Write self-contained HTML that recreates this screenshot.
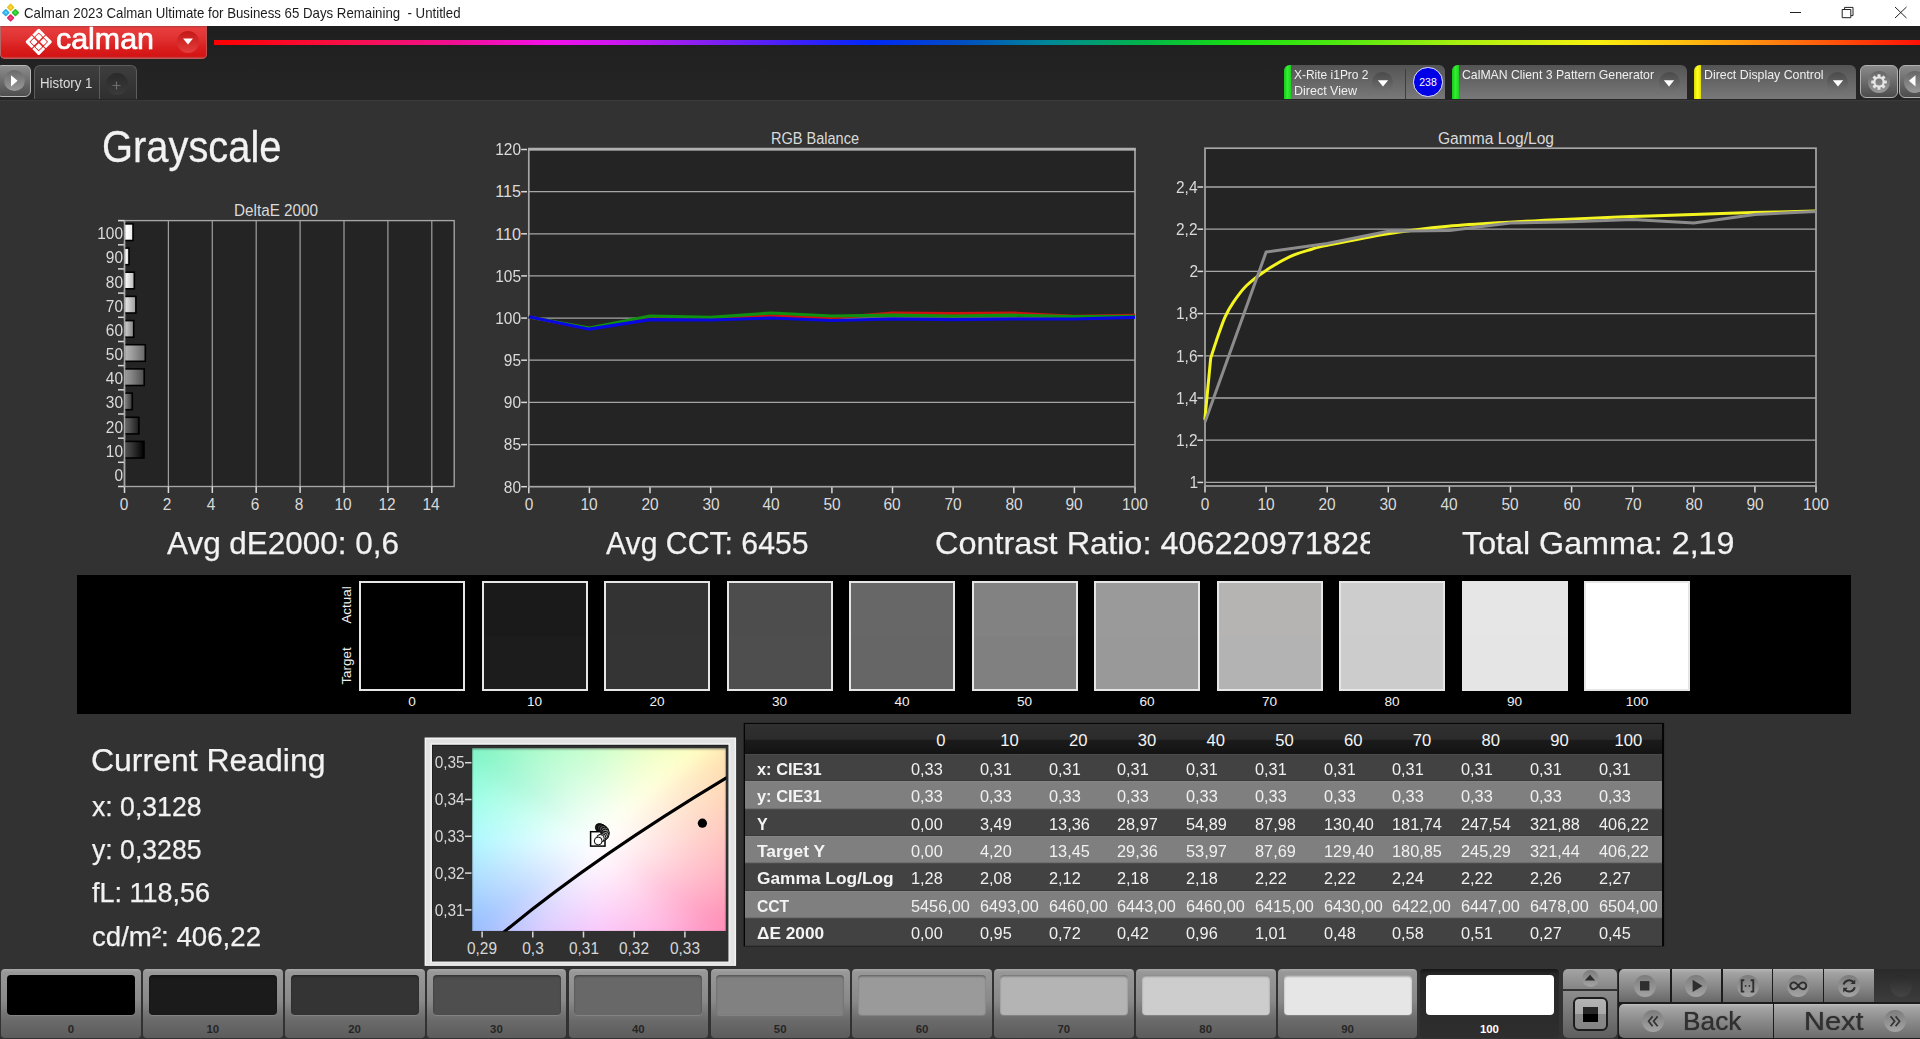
<!DOCTYPE html>
<html><head><meta charset="utf-8"><title>Calman</title>
<style>
html,body{margin:0;padding:0;background:#323232;overflow:hidden}
#app{position:relative;width:1920px;height:1039px;overflow:hidden;background:#323232;font-family:"Liberation Sans",sans-serif}
#app div,#app svg,#app span.t{position:absolute}
#app span.t{white-space:nowrap;display:block}
#app svg{overflow:visible}
</style></head>
<body>
<div id="app">
<div style="left:0;top:0;width:1920px;height:25.5px;background:#fff"></div>
<svg style="left:0;top:0" width="24" height="26" viewBox="0 0 24 26">
<g transform="translate(10.6,12.6)">
<rect x="-2.85" y="-2.85" width="5.7" height="5.7" rx="0.9" transform="translate(0,-5.3) rotate(45)" fill="#f0c31c"/>
<rect x="-2.85" y="-2.85" width="5.7" height="5.7" rx="0.9" transform="translate(-4.8,0) rotate(45)" fill="#34ade6"/>
<rect x="-2.85" y="-2.85" width="5.7" height="5.7" rx="0.9" transform="translate(4.8,0) rotate(45)" fill="#2cbc2c"/>
<rect x="-2.85" y="-2.85" width="5.7" height="5.7" rx="0.9" transform="translate(0,5.3) rotate(45)" fill="#de2a62"/>
<rect x="-1.2" y="-1.2" width="2.4" height="2.4" transform="translate(0,-5.3) rotate(45)" fill="#f8d838"/>
<rect x="-1.2" y="-1.2" width="2.4" height="2.4" transform="translate(-4.8,0) rotate(45)" fill="#58d4f8"/>
<rect x="-1.2" y="-1.2" width="2.4" height="2.4" transform="translate(4.8,0) rotate(45)" fill="#40e840"/>
<rect x="-1.2" y="-1.2" width="2.4" height="2.4" transform="translate(0,5.3) rotate(45)" fill="#f84888"/>
</g></svg>
<span class="t" style="top:5.10px;font-size:15px;line-height:15px;color:#1c1c1c;left:23.50px;transform-origin:0 0;transform:scaleX(0.8829);">Calman 2023 Calman Ultimate for Business 65 Days Remaining&nbsp; - Untitled</span>
<svg style="left:1780px;top:0" width="140" height="26" viewBox="1780 0 140 26" fill="none" stroke="#222" stroke-width="1">
<path d="M1790 12.5H1801"/>
<path d="M1842.2 9.5h8.6v8.2h-8.6z"/><path d="M1844.6 9.3V7.4h8.4v8.2h-2"/>
<path d="M1895 7L1906.5 18M1906.5 7L1895 18"/>
</svg>
<div style="left:0;top:25.5px;width:1920px;height:74px;background:linear-gradient(#1e1e1e,#222 50%,#252525)"></div><div style="left:0;top:99.5px;width:1920px;height:1.3px;background:#3a3a3a"></div>
<div style="left:0;top:25.5px;width:206.5px;height:33px;border-radius:0 0 5px 5px;background:linear-gradient(#b43a3a 0,#e73e3e 2px,#e03030 40%,#d81c1c 70%,#d41414 92%,#b86a6a 100%);box-shadow:inset 1px 0 0 #b06a6a, inset -1px 0 0 #c05050"></div>
<svg style="left:20px;top:26px" width="40" height="32" viewBox="20 26 40 32">
<g fill="none" stroke="#fff" stroke-width="3.0" stroke-linecap="butt" stroke-linejoin="round">
<path d="M33.35 35.80L38.75 30.40L44.15 35.80"/>
<path d="M44.85 36.50L50.25 41.90L44.85 47.30"/>
<path d="M44.15 48.00L38.75 53.40L33.35 48.00"/>
<path d="M32.65 47.30L27.25 41.90L32.65 36.50"/>
</g>
<g fill="#fff">
<rect x="-2.55" y="-2.55" width="5.1" height="5.1" rx="0.9" transform="translate(38.75,37.2) rotate(45)"/>
<rect x="-2.55" y="-2.55" width="5.1" height="5.1" rx="0.9" transform="translate(38.75,46.6) rotate(45)"/>
<rect x="-2.55" y="-2.55" width="5.1" height="5.1" rx="0.9" transform="translate(34.05,41.9) rotate(45)"/>
<rect x="-2.55" y="-2.55" width="5.1" height="5.1" rx="0.9" transform="translate(43.45,41.9) rotate(45)"/>
</g></svg>
<span class="t" style="top:23.80px;font-size:29.5px;line-height:29.5px;color:#fff;left:55.50px;transform-origin:0 0;transform:scaleX(1.0304);-webkit-text-stroke:0.7px #fff;">calman</span>
<div style="left:176.5px;top:30.5px;width:22px;height:22px;border-radius:50%;background:linear-gradient(#c41818,#e43c3c)"></div>
<svg style="left:181.5px;top:37.2px" width="12" height="10" viewBox="0 0 12 10"><path d="M1 1.5h10L6 7.5z" fill="#fff"/></svg>
<div style="left:214px;top:40px;width:1706px;height:4.5px;background:linear-gradient(90deg,#ff0000 0,#f8104c 8%,#f01090 14%,#f410e8 19.6%,#c818f0 24%,#9020f0 28%,#4020f8 34%,#0028f8 38.5%,#0050c0 44%,#008898 49%,#00b050 54%,#18e010 60%,#50e810 66%,#a8f010 73%,#f8f010 81%,#ffc010 86%,#ff8010 91.5%,#ff3808 97%,#ff1008 100%)"></div>
<div style="left:-4px;top:64.5px;width:34.5px;height:32px;border-radius:6px;border:1.5px solid #b8b8b8;box-sizing:border-box;background:linear-gradient(#8c8c8c,#4e4e4e)"></div>
<div style="left:3.5px;top:70px;width:21px;height:21px;border-radius:50%;background:linear-gradient(#6a6a6a,#9a9a9a)"></div>
<svg style="left:8px;top:73px" width="12" height="16" viewBox="0 0 12 16"><path d="M3 2.2L9.6 7.8L3 13.4z" fill="#fff"/></svg>
<div style="left:33.5px;top:65px;width:103.5px;height:34px;border-radius:6px 6px 0 0;box-sizing:border-box;border:1px solid #5c5c5c;border-bottom:none;background:linear-gradient(#3e3e3e,#2f2f2f)"></div>
<div style="left:98.5px;top:66px;width:1.5px;height:33px;background:#5c5c5c"></div>
<span class="t" style="top:76.00px;font-size:14px;line-height:14px;color:#dcdcdc;left:40.00px;transform-origin:0 0;transform:scaleX(0.9505);">History 1</span>
<div style="left:105.5px;top:73px;width:22px;height:22px;border-radius:50%;background:linear-gradient(#2a2a2a,#3a3a3a)"></div>
<svg style="left:111px;top:80px" width="11" height="11" viewBox="0 0 11 11"><path d="M5.5 1.5v8M1.5 5.5h8" stroke="#6e6e6e" stroke-width="1.2"/></svg>
<div style="left:1284px;top:65px;width:161px;height:34px;border-radius:6px 6px 0 0;background:linear-gradient(#545454,#6a6a6a 60%,#787878)"></div>
<div style="left:1284px;top:65px;width:7px;height:34px;border-radius:6px 0 0 0;background:linear-gradient(90deg,#18c818,#30f030 50%,#20d020)"></div>
<div style="left:1404.5px;top:69px;width:1.5px;height:30px;background:#3e3e3e"></div>
<span class="t" style="top:68.60px;font-size:12.6px;line-height:12.6px;color:#f0f0f0;left:1294.00px;transform-origin:0 0;transform:scaleX(0.9502);">X-Rite i1Pro 2</span>
<span class="t" style="top:85.20px;font-size:12.6px;line-height:12.6px;color:#f0f0f0;left:1294.00px;transform-origin:0 0;transform:scaleX(0.9926);">Direct View</span>
<div style="left:1372.0px;top:72.0px;width:21.0px;height:21.0px;border-radius:50%;background:linear-gradient(#4a4a4a,#737373)"></div><svg style="left:1376.5px;top:79.0px" width="12" height="9" viewBox="0 0 12 9"><path d="M0.8 1.2h10.4L6 7.4z" fill="#fff"/></svg>
<div style="left:1413.3px;top:67.3px;width:29.4px;height:29.4px;box-sizing:border-box;border-radius:50%;background:#0000e6;border:1.5px solid #e8e8ff"></div>
<span class="t" style="top:77.20px;font-size:11.5px;line-height:11.5px;color:#fff;left:1428.00px;transform-origin:0 0;transform:scaleX(0.9121) translateX(-50%);">238</span>
<div style="left:1452px;top:65px;width:235px;height:34px;border-radius:6px 6px 0 0;background:linear-gradient(#545454,#6a6a6a 60%,#787878)"></div>
<div style="left:1452px;top:65px;width:7px;height:34px;border-radius:6px 0 0 0;background:linear-gradient(90deg,#18c818,#30f030 50%,#20d020)"></div>
<span class="t" style="top:68.60px;font-size:12.6px;line-height:12.6px;color:#f0f0f0;left:1462.00px;transform-origin:0 0;transform:scaleX(0.9727);">CalMAN Client 3 Pattern Generator</span>
<div style="left:1658.5px;top:72.0px;width:21.0px;height:21.0px;border-radius:50%;background:linear-gradient(#4a4a4a,#737373)"></div><svg style="left:1663px;top:79.0px" width="12" height="9" viewBox="0 0 12 9"><path d="M0.8 1.2h10.4L6 7.4z" fill="#fff"/></svg>
<div style="left:1694px;top:65px;width:162px;height:34px;border-radius:6px 6px 0 0;background:linear-gradient(#545454,#6a6a6a 60%,#787878)"></div>
<div style="left:1694px;top:65px;width:7px;height:34px;border-radius:6px 0 0 0;background:linear-gradient(90deg,#d8d800,#ffff20 50%,#e0e000)"></div>
<span class="t" style="top:68.60px;font-size:12.6px;line-height:12.6px;color:#f0f0f0;left:1704.00px;transform-origin:0 0;transform:scaleX(0.9813);">Direct Display Control</span>
<div style="left:1827.0px;top:72.0px;width:21.0px;height:21.0px;border-radius:50%;background:linear-gradient(#4a4a4a,#737373)"></div><svg style="left:1831.5px;top:79.0px" width="12" height="9" viewBox="0 0 12 9"><path d="M0.8 1.2h10.4L6 7.4z" fill="#fff"/></svg>
<div style="left:1859.5px;top:65px;width:38px;height:32.5px;border-radius:6px;border:1.5px solid #b0b0b0;box-sizing:border-box;background:linear-gradient(#8a8a8a,#4c4c4c)"></div>
<div style="left:1867.5px;top:70.5px;width:22px;height:22px;border-radius:50%;background:linear-gradient(#666,#999)"></div>
<svg style="left:1868.5px;top:71.5px" width="20" height="20" viewBox="-10 -10 20 20"><g fill="#e6e6e6"><rect x="-1.5" y="-7.8" width="3" height="3.2" rx="0.5" transform="rotate(0)"/><rect x="-1.5" y="-7.8" width="3" height="3.2" rx="0.5" transform="rotate(45)"/><rect x="-1.5" y="-7.8" width="3" height="3.2" rx="0.5" transform="rotate(90)"/><rect x="-1.5" y="-7.8" width="3" height="3.2" rx="0.5" transform="rotate(135)"/><rect x="-1.5" y="-7.8" width="3" height="3.2" rx="0.5" transform="rotate(180)"/><rect x="-1.5" y="-7.8" width="3" height="3.2" rx="0.5" transform="rotate(225)"/><rect x="-1.5" y="-7.8" width="3" height="3.2" rx="0.5" transform="rotate(270)"/><rect x="-1.5" y="-7.8" width="3" height="3.2" rx="0.5" transform="rotate(315)"/></g><circle r="4.6" fill="none" stroke="#e6e6e6" stroke-width="2.1"/></svg>
<div style="left:1898.5px;top:65px;width:38px;height:32.5px;border-radius:6px;border:1.5px solid #b0b0b0;box-sizing:border-box;background:linear-gradient(#8a8a8a,#4c4c4c)"></div>
<div style="left:1904px;top:70.5px;width:22px;height:22px;border-radius:50%;background:linear-gradient(#666,#999)"></div>
<svg style="left:1906px;top:73px" width="12" height="16" viewBox="0 0 12 16"><path d="M9.5 2.2L2.9 7.8L9.5 13.4z" fill="#fff"/></svg>
<svg style="left:0;top:200px" width="480" height="300" viewBox="0 200 480 300"><defs><linearGradient id="bg100" x1="0" x2="1" y1="0" y2="0"><stop offset="0" stop-color="#ffffff"/><stop offset="0.35" stop-color="#ffffff"/><stop offset="1" stop-color="#e6e6e6"/></linearGradient><linearGradient id="bg90" x1="0" x2="1" y1="0" y2="0"><stop offset="0" stop-color="#ffffff"/><stop offset="0.35" stop-color="#ffffff"/><stop offset="1" stop-color="#cccccc"/></linearGradient><linearGradient id="bg80" x1="0" x2="1" y1="0" y2="0"><stop offset="0" stop-color="#ffffff"/><stop offset="0.35" stop-color="#ebebeb"/><stop offset="1" stop-color="#b3b3b3"/></linearGradient><linearGradient id="bg70" x1="0" x2="1" y1="0" y2="0"><stop offset="0" stop-color="#ebebeb"/><stop offset="0.35" stop-color="#d1d1d1"/><stop offset="1" stop-color="#999999"/></linearGradient><linearGradient id="bg60" x1="0" x2="1" y1="0" y2="0"><stop offset="0" stop-color="#d1d1d1"/><stop offset="0.35" stop-color="#b8b8b8"/><stop offset="1" stop-color="#808080"/></linearGradient><linearGradient id="bg50" x1="0" x2="1" y1="0" y2="0"><stop offset="0" stop-color="#b8b8b8"/><stop offset="0.35" stop-color="#9e9e9e"/><stop offset="1" stop-color="#666666"/></linearGradient><linearGradient id="bg40" x1="0" x2="1" y1="0" y2="0"><stop offset="0" stop-color="#9e9e9e"/><stop offset="0.35" stop-color="#858585"/><stop offset="1" stop-color="#4d4d4d"/></linearGradient><linearGradient id="bg30" x1="0" x2="1" y1="0" y2="0"><stop offset="0" stop-color="#858585"/><stop offset="0.35" stop-color="#6b6b6b"/><stop offset="1" stop-color="#333333"/></linearGradient><linearGradient id="bg20" x1="0" x2="1" y1="0" y2="0"><stop offset="0" stop-color="#6b6b6b"/><stop offset="0.35" stop-color="#525252"/><stop offset="1" stop-color="#1a1a1a"/></linearGradient><linearGradient id="bg10" x1="0" x2="1" y1="0" y2="0"><stop offset="0" stop-color="#525252"/><stop offset="0.35" stop-color="#383838"/><stop offset="1" stop-color="#000000"/></linearGradient></defs><rect x="124.5" y="220.6" width="329.7" height="265.9" fill="#242424"/><path d="M168.4 220.6V486.5" stroke="#9c9c9c" stroke-width="1.25"/><path d="M212.3 220.6V486.5" stroke="#9c9c9c" stroke-width="1.25"/><path d="M256.2 220.6V486.5" stroke="#9c9c9c" stroke-width="1.25"/><path d="M300.1 220.6V486.5" stroke="#9c9c9c" stroke-width="1.25"/><path d="M344.0 220.6V486.5" stroke="#9c9c9c" stroke-width="1.25"/><path d="M387.9 220.6V486.5" stroke="#9c9c9c" stroke-width="1.25"/><path d="M431.8 220.6V486.5" stroke="#9c9c9c" stroke-width="1.25"/><rect x="124.5" y="220.6" width="329.7" height="265.9" fill="none" stroke="#a6a6a6" stroke-width="1.35"/><path d="M124.5 486.5v6.5" stroke="#dadada" stroke-width="1.5"/><path d="M168.4 486.5v6.5" stroke="#dadada" stroke-width="1.5"/><path d="M212.3 486.5v6.5" stroke="#dadada" stroke-width="1.5"/><path d="M256.2 486.5v6.5" stroke="#dadada" stroke-width="1.5"/><path d="M300.1 486.5v6.5" stroke="#dadada" stroke-width="1.5"/><path d="M344.0 486.5v6.5" stroke="#dadada" stroke-width="1.5"/><path d="M387.9 486.5v6.5" stroke="#dadada" stroke-width="1.5"/><path d="M431.8 486.5v6.5" stroke="#dadada" stroke-width="1.5"/><path d="M118.0 220.6h6.5" stroke="#dadada" stroke-width="1.5"/><rect x="124.3" y="223.9" width="8.7" height="16.6" fill="url(#bg100)" stroke="#000" stroke-width="1.6"/><path d="M118.0 244.8h6.5" stroke="#dadada" stroke-width="1.5"/><rect x="124.3" y="248.1" width="4.7" height="16.6" fill="url(#bg90)" stroke="#000" stroke-width="1.6"/><path d="M118.0 268.9h6.5" stroke="#dadada" stroke-width="1.5"/><rect x="124.3" y="272.2" width="10.0" height="16.6" fill="url(#bg80)" stroke="#000" stroke-width="1.6"/><path d="M118.0 293.1h6.5" stroke="#dadada" stroke-width="1.5"/><rect x="124.3" y="296.4" width="11.6" height="16.6" fill="url(#bg70)" stroke="#000" stroke-width="1.6"/><path d="M118.0 317.3h6.5" stroke="#dadada" stroke-width="1.5"/><rect x="124.3" y="320.6" width="9.4" height="16.6" fill="url(#bg60)" stroke="#000" stroke-width="1.6"/><path d="M118.0 341.5h6.5" stroke="#dadada" stroke-width="1.5"/><rect x="124.3" y="344.7" width="21.0" height="16.6" fill="url(#bg50)" stroke="#000" stroke-width="1.6"/><path d="M118.0 365.6h6.5" stroke="#dadada" stroke-width="1.5"/><rect x="124.3" y="368.9" width="19.9" height="16.6" fill="url(#bg40)" stroke="#000" stroke-width="1.6"/><path d="M118.0 389.8h6.5" stroke="#dadada" stroke-width="1.5"/><rect x="124.3" y="393.1" width="8.0" height="16.6" fill="url(#bg30)" stroke="#000" stroke-width="1.6"/><path d="M118.0 414.0h6.5" stroke="#dadada" stroke-width="1.5"/><rect x="124.3" y="417.3" width="14.6" height="16.6" fill="url(#bg20)" stroke="#000" stroke-width="1.6"/><path d="M118.0 438.2h6.5" stroke="#dadada" stroke-width="1.5"/><rect x="124.3" y="441.4" width="19.7" height="16.6" fill="url(#bg10)" stroke="#000" stroke-width="1.6"/><path d="M118.0 462.3h6.5" stroke="#dadada" stroke-width="1.5"/><path d="M118.0 486.5h6.5" stroke="#dadada" stroke-width="1.5"/><path d="M124.5 220.6V487.3" stroke="#a6a6a6" stroke-width="1.6"/></svg>
<span class="t" style="top:496.00px;font-size:16.2px;line-height:16.2px;color:#dadada;left:123.50px;transform-origin:0 0;transform:scaleX(0.9539) translateX(-50%);">0</span>
<span class="t" style="top:496.00px;font-size:16.2px;line-height:16.2px;color:#dadada;left:167.40px;transform-origin:0 0;transform:scaleX(0.9539) translateX(-50%);">2</span>
<span class="t" style="top:496.00px;font-size:16.2px;line-height:16.2px;color:#dadada;left:211.30px;transform-origin:0 0;transform:scaleX(0.9539) translateX(-50%);">4</span>
<span class="t" style="top:496.00px;font-size:16.2px;line-height:16.2px;color:#dadada;left:255.20px;transform-origin:0 0;transform:scaleX(0.9539) translateX(-50%);">6</span>
<span class="t" style="top:496.00px;font-size:16.2px;line-height:16.2px;color:#dadada;left:299.10px;transform-origin:0 0;transform:scaleX(0.9539) translateX(-50%);">8</span>
<span class="t" style="top:496.00px;font-size:16.2px;line-height:16.2px;color:#dadada;left:343.00px;transform-origin:0 0;transform:scaleX(0.9547) translateX(-50%);">10</span>
<span class="t" style="top:496.00px;font-size:16.2px;line-height:16.2px;color:#dadada;left:386.90px;transform-origin:0 0;transform:scaleX(0.9547) translateX(-50%);">12</span>
<span class="t" style="top:496.00px;font-size:16.2px;line-height:16.2px;color:#dadada;left:430.80px;transform-origin:0 0;transform:scaleX(0.9547) translateX(-50%);">14</span>
<span class="t" style="top:225.19px;font-size:16.2px;line-height:16.2px;color:#dadada;right:1797.00px;transform-origin:100% 0;transform:scaleX(0.9550);">100</span>
<span class="t" style="top:249.36px;font-size:16.2px;line-height:16.2px;color:#dadada;right:1797.00px;transform-origin:100% 0;transform:scaleX(0.9547);">90</span>
<span class="t" style="top:273.53px;font-size:16.2px;line-height:16.2px;color:#dadada;right:1797.00px;transform-origin:100% 0;transform:scaleX(0.9547);">80</span>
<span class="t" style="top:297.70px;font-size:16.2px;line-height:16.2px;color:#dadada;right:1797.00px;transform-origin:100% 0;transform:scaleX(0.9547);">70</span>
<span class="t" style="top:321.88px;font-size:16.2px;line-height:16.2px;color:#dadada;right:1797.00px;transform-origin:100% 0;transform:scaleX(0.9547);">60</span>
<span class="t" style="top:346.05px;font-size:16.2px;line-height:16.2px;color:#dadada;right:1797.00px;transform-origin:100% 0;transform:scaleX(0.9547);">50</span>
<span class="t" style="top:370.22px;font-size:16.2px;line-height:16.2px;color:#dadada;right:1797.00px;transform-origin:100% 0;transform:scaleX(0.9547);">40</span>
<span class="t" style="top:394.40px;font-size:16.2px;line-height:16.2px;color:#dadada;right:1797.00px;transform-origin:100% 0;transform:scaleX(0.9547);">30</span>
<span class="t" style="top:418.57px;font-size:16.2px;line-height:16.2px;color:#dadada;right:1797.00px;transform-origin:100% 0;transform:scaleX(0.9547);">20</span>
<span class="t" style="top:442.74px;font-size:16.2px;line-height:16.2px;color:#dadada;right:1797.00px;transform-origin:100% 0;transform:scaleX(0.9547);">10</span>
<span class="t" style="top:466.91px;font-size:16.2px;line-height:16.2px;color:#dadada;right:1797.00px;transform-origin:100% 0;transform:scaleX(0.9539);">0</span>
<span class="t" style="top:202.60px;font-size:16px;line-height:16px;color:#dadada;left:276.20px;transform-origin:0 0;transform:scaleX(0.9539) translateX(-50%);">DeltaE 2000</span>
<svg style="left:490px;top:140px" width="670px" height="360" viewBox="490 140 670 360"><rect x="528.8" y="149.5" width="606.2" height="337.2" fill="#242424"/><path d="M521.1999999999999 149.5h5.8" stroke="#dadada" stroke-width="1.5"/><path d="M528.8 191.7H1135.0" stroke="#a6a6a6" stroke-width="1.3"/><path d="M521.1999999999999 191.7h5.8" stroke="#dadada" stroke-width="1.5"/><path d="M528.8 233.8H1135.0" stroke="#a6a6a6" stroke-width="1.3"/><path d="M521.1999999999999 233.8h5.8" stroke="#dadada" stroke-width="1.5"/><path d="M528.8 275.9H1135.0" stroke="#a6a6a6" stroke-width="1.3"/><path d="M521.1999999999999 275.9h5.8" stroke="#dadada" stroke-width="1.5"/><path d="M528.8 318.1H1135.0" stroke="#a6a6a6" stroke-width="1.3"/><path d="M521.1999999999999 318.1h5.8" stroke="#dadada" stroke-width="1.5"/><path d="M528.8 360.2H1135.0" stroke="#a6a6a6" stroke-width="1.3"/><path d="M521.1999999999999 360.2h5.8" stroke="#dadada" stroke-width="1.5"/><path d="M528.8 402.4H1135.0" stroke="#a6a6a6" stroke-width="1.3"/><path d="M521.1999999999999 402.4h5.8" stroke="#dadada" stroke-width="1.5"/><path d="M528.8 444.6H1135.0" stroke="#a6a6a6" stroke-width="1.3"/><path d="M521.1999999999999 444.6h5.8" stroke="#dadada" stroke-width="1.5"/><path d="M521.1999999999999 486.7h5.8" stroke="#dadada" stroke-width="1.5"/><path d="M528.8 486.7v6.5" stroke="#dadada" stroke-width="1.5"/><path d="M589.4 486.7v6.5" stroke="#dadada" stroke-width="1.5"/><path d="M650.0 486.7v6.5" stroke="#dadada" stroke-width="1.5"/><path d="M710.7 486.7v6.5" stroke="#dadada" stroke-width="1.5"/><path d="M771.3 486.7v6.5" stroke="#dadada" stroke-width="1.5"/><path d="M831.9 486.7v6.5" stroke="#dadada" stroke-width="1.5"/><path d="M892.5 486.7v6.5" stroke="#dadada" stroke-width="1.5"/><path d="M953.1 486.7v6.5" stroke="#dadada" stroke-width="1.5"/><path d="M1013.8 486.7v6.5" stroke="#dadada" stroke-width="1.5"/><path d="M1074.4 486.7v6.5" stroke="#dadada" stroke-width="1.5"/><path d="M1135.0 486.7v6.5" stroke="#dadada" stroke-width="1.5"/><rect x="528.8" y="149.5" width="606.2" height="337.2" fill="none" stroke="#a6a6a6" stroke-width="1.7"/><path d="M528.0 149.2H1135.8" stroke="#b0b0b0" stroke-width="2.8"/><path d="M528.8 317.0L589.4 328.6L650.0 318.0L710.7 318.5L771.3 316.0L831.9 318.0L892.5 313.2L953.1 313.6L1013.8 313.2L1074.4 316.4L1135.0 315.3" fill="none" stroke="#d01010" stroke-width="3.2" stroke-linejoin="round"/><path d="M528.8 317.0L589.4 328.0L650.0 316.0L710.7 317.3L771.3 313.0L831.9 316.0L892.5 315.2L953.1 316.0L1013.8 315.2L1074.4 316.6L1135.0 316.4" fill="none" stroke="#109010" stroke-width="3.2" stroke-linejoin="round"/><path d="M528.8 316.7L589.4 329.2L650.0 319.7L710.7 320.0L771.3 318.0L831.9 320.5L892.5 319.0L953.1 319.7L1013.8 319.0L1074.4 319.0L1135.0 317.3" fill="none" stroke="#0808e0" stroke-width="3.2" stroke-linejoin="round"/></svg>
<span class="t" style="top:141.30px;font-size:16.2px;line-height:16.2px;color:#dadada;right:1399.00px;transform-origin:100% 0;transform:scaleX(0.9550);">120</span>
<span class="t" style="top:183.45px;font-size:16.2px;line-height:16.2px;color:#dadada;right:1399.00px;transform-origin:100% 0;">115</span>
<span class="t" style="top:225.60px;font-size:16.2px;line-height:16.2px;color:#dadada;right:1399.00px;transform-origin:100% 0;">110</span>
<span class="t" style="top:267.75px;font-size:16.2px;line-height:16.2px;color:#dadada;right:1399.00px;transform-origin:100% 0;transform:scaleX(0.9550);">105</span>
<span class="t" style="top:309.90px;font-size:16.2px;line-height:16.2px;color:#dadada;right:1399.00px;transform-origin:100% 0;transform:scaleX(0.9550);">100</span>
<span class="t" style="top:352.05px;font-size:16.2px;line-height:16.2px;color:#dadada;right:1399.00px;transform-origin:100% 0;transform:scaleX(0.9547);">95</span>
<span class="t" style="top:394.20px;font-size:16.2px;line-height:16.2px;color:#dadada;right:1399.00px;transform-origin:100% 0;transform:scaleX(0.9547);">90</span>
<span class="t" style="top:436.35px;font-size:16.2px;line-height:16.2px;color:#dadada;right:1399.00px;transform-origin:100% 0;transform:scaleX(0.9547);">85</span>
<span class="t" style="top:478.50px;font-size:16.2px;line-height:16.2px;color:#dadada;right:1399.00px;transform-origin:100% 0;transform:scaleX(0.9547);">80</span>
<span class="t" style="top:496.00px;font-size:16.2px;line-height:16.2px;color:#dadada;left:528.70px;transform-origin:0 0;transform:scaleX(0.9539) translateX(-50%);">0</span>
<span class="t" style="top:496.00px;font-size:16.2px;line-height:16.2px;color:#dadada;left:589.32px;transform-origin:0 0;transform:scaleX(0.9547) translateX(-50%);">10</span>
<span class="t" style="top:496.00px;font-size:16.2px;line-height:16.2px;color:#dadada;left:649.94px;transform-origin:0 0;transform:scaleX(0.9547) translateX(-50%);">20</span>
<span class="t" style="top:496.00px;font-size:16.2px;line-height:16.2px;color:#dadada;left:710.56px;transform-origin:0 0;transform:scaleX(0.9547) translateX(-50%);">30</span>
<span class="t" style="top:496.00px;font-size:16.2px;line-height:16.2px;color:#dadada;left:771.18px;transform-origin:0 0;transform:scaleX(0.9547) translateX(-50%);">40</span>
<span class="t" style="top:496.00px;font-size:16.2px;line-height:16.2px;color:#dadada;left:831.80px;transform-origin:0 0;transform:scaleX(0.9547) translateX(-50%);">50</span>
<span class="t" style="top:496.00px;font-size:16.2px;line-height:16.2px;color:#dadada;left:892.42px;transform-origin:0 0;transform:scaleX(0.9547) translateX(-50%);">60</span>
<span class="t" style="top:496.00px;font-size:16.2px;line-height:16.2px;color:#dadada;left:953.04px;transform-origin:0 0;transform:scaleX(0.9547) translateX(-50%);">70</span>
<span class="t" style="top:496.00px;font-size:16.2px;line-height:16.2px;color:#dadada;left:1013.66px;transform-origin:0 0;transform:scaleX(0.9547) translateX(-50%);">80</span>
<span class="t" style="top:496.00px;font-size:16.2px;line-height:16.2px;color:#dadada;left:1074.28px;transform-origin:0 0;transform:scaleX(0.9547) translateX(-50%);">90</span>
<span class="t" style="top:496.00px;font-size:16.2px;line-height:16.2px;color:#dadada;left:1134.90px;transform-origin:0 0;transform:scaleX(0.9550) translateX(-50%);">100</span>
<span class="t" style="top:130.60px;font-size:16px;line-height:16px;color:#dadada;left:815.30px;transform-origin:0 0;transform:scaleX(0.9078) translateX(-50%);">RGB Balance</span>
<svg style="left:1170px;top:140px" width="680" height="360" viewBox="1170 140 680 360"><rect x="1205.0" y="148.2" width="611.0" height="337.8" fill="#242424"/><path d="M1205.0 187.0H1816.0" stroke="#a6a6a6" stroke-width="1.3"/><path d="M1197.4 187.0h5.8" stroke="#dadada" stroke-width="1.5"/><path d="M1205.0 229.2H1816.0" stroke="#a6a6a6" stroke-width="1.3"/><path d="M1197.4 229.2h5.8" stroke="#dadada" stroke-width="1.5"/><path d="M1205.0 271.4H1816.0" stroke="#a6a6a6" stroke-width="1.3"/><path d="M1197.4 271.4h5.8" stroke="#dadada" stroke-width="1.5"/><path d="M1205.0 313.6H1816.0" stroke="#a6a6a6" stroke-width="1.3"/><path d="M1197.4 313.6h5.8" stroke="#dadada" stroke-width="1.5"/><path d="M1205.0 355.8H1816.0" stroke="#a6a6a6" stroke-width="1.3"/><path d="M1197.4 355.8h5.8" stroke="#dadada" stroke-width="1.5"/><path d="M1205.0 398.0H1816.0" stroke="#a6a6a6" stroke-width="1.3"/><path d="M1197.4 398.0h5.8" stroke="#dadada" stroke-width="1.5"/><path d="M1205.0 440.2H1816.0" stroke="#a6a6a6" stroke-width="1.3"/><path d="M1197.4 440.2h5.8" stroke="#dadada" stroke-width="1.5"/><path d="M1205.0 482.4H1816.0" stroke="#a6a6a6" stroke-width="1.3"/><path d="M1197.4 482.4h5.8" stroke="#dadada" stroke-width="1.5"/><path d="M1205.0 486.0v6.5" stroke="#dadada" stroke-width="1.5"/><path d="M1266.1 486.0v6.5" stroke="#dadada" stroke-width="1.5"/><path d="M1327.2 486.0v6.5" stroke="#dadada" stroke-width="1.5"/><path d="M1388.3 486.0v6.5" stroke="#dadada" stroke-width="1.5"/><path d="M1449.4 486.0v6.5" stroke="#dadada" stroke-width="1.5"/><path d="M1510.5 486.0v6.5" stroke="#dadada" stroke-width="1.5"/><path d="M1571.6 486.0v6.5" stroke="#dadada" stroke-width="1.5"/><path d="M1632.7 486.0v6.5" stroke="#dadada" stroke-width="1.5"/><path d="M1693.8 486.0v6.5" stroke="#dadada" stroke-width="1.5"/><path d="M1754.9 486.0v6.5" stroke="#dadada" stroke-width="1.5"/><path d="M1816.0 486.0v6.5" stroke="#dadada" stroke-width="1.5"/><rect x="1205.0" y="148.2" width="611.0" height="337.8" fill="none" stroke="#a6a6a6" stroke-width="1.7"/><path d="M1204.8 420.0L1210.7 358.2C1211.6 355.3 1213.9 347.8 1216.3 340.9C1218.7 334.0 1222.1 323.6 1225.0 317.1C1227.9 310.6 1230.0 307.2 1233.6 301.9C1237.2 296.6 1241.3 290.7 1246.6 285.5C1251.9 280.3 1258.1 275.7 1265.3 270.9C1272.5 266.1 1282.3 260.2 1290.0 256.6C1297.7 253.0 1305.6 251.1 1311.6 249.3C1317.6 247.5 1313.4 248.2 1325.9 245.6C1338.4 243.0 1366.2 237.1 1386.5 233.9C1406.8 230.7 1427.6 228.2 1448.0 226.3C1468.4 224.4 1488.5 223.4 1508.7 222.2C1528.9 221.0 1548.6 220.1 1569.0 219.2C1589.4 218.3 1610.3 217.4 1631.0 216.6C1651.7 215.8 1672.7 215.3 1693.0 214.6C1713.3 213.9 1732.6 213.2 1753.0 212.6C1773.4 212.0 1805.1 211.3 1815.5 211.0" fill="none" stroke="#f4f420" stroke-width="3" stroke-linejoin="round"/><path d="M1205.0 422.0L1266.1 252.1L1327.2 243.5L1388.3 231.3L1449.4 230.5L1510.5 223.1L1571.6 221.8L1632.7 219.6L1693.8 223.1L1754.9 214.4L1816.0 211.4" fill="none" stroke="#8c8c8c" stroke-width="3" stroke-linejoin="round"/></svg>
<span class="t" style="top:178.80px;font-size:16.2px;line-height:16.2px;color:#dadada;right:722.40px;transform-origin:100% 0;transform:scaleX(0.9549);">2,4</span>
<span class="t" style="top:221.00px;font-size:16.2px;line-height:16.2px;color:#dadada;right:722.40px;transform-origin:100% 0;transform:scaleX(0.9549);">2,2</span>
<span class="t" style="top:263.20px;font-size:16.2px;line-height:16.2px;color:#dadada;right:722.40px;transform-origin:100% 0;transform:scaleX(0.9539);">2</span>
<span class="t" style="top:305.40px;font-size:16.2px;line-height:16.2px;color:#dadada;right:722.40px;transform-origin:100% 0;transform:scaleX(0.9549);">1,8</span>
<span class="t" style="top:347.60px;font-size:16.2px;line-height:16.2px;color:#dadada;right:722.40px;transform-origin:100% 0;transform:scaleX(0.9549);">1,6</span>
<span class="t" style="top:389.80px;font-size:16.2px;line-height:16.2px;color:#dadada;right:722.40px;transform-origin:100% 0;transform:scaleX(0.9549);">1,4</span>
<span class="t" style="top:432.00px;font-size:16.2px;line-height:16.2px;color:#dadada;right:722.40px;transform-origin:100% 0;transform:scaleX(0.9549);">1,2</span>
<span class="t" style="top:474.20px;font-size:16.2px;line-height:16.2px;color:#dadada;right:722.40px;transform-origin:100% 0;transform:scaleX(0.9539);">1</span>
<span class="t" style="top:496.00px;font-size:16.2px;line-height:16.2px;color:#dadada;left:1204.90px;transform-origin:0 0;transform:scaleX(0.9539) translateX(-50%);">0</span>
<span class="t" style="top:496.00px;font-size:16.2px;line-height:16.2px;color:#dadada;left:1266.00px;transform-origin:0 0;transform:scaleX(0.9547) translateX(-50%);">10</span>
<span class="t" style="top:496.00px;font-size:16.2px;line-height:16.2px;color:#dadada;left:1327.10px;transform-origin:0 0;transform:scaleX(0.9547) translateX(-50%);">20</span>
<span class="t" style="top:496.00px;font-size:16.2px;line-height:16.2px;color:#dadada;left:1388.20px;transform-origin:0 0;transform:scaleX(0.9547) translateX(-50%);">30</span>
<span class="t" style="top:496.00px;font-size:16.2px;line-height:16.2px;color:#dadada;left:1449.30px;transform-origin:0 0;transform:scaleX(0.9547) translateX(-50%);">40</span>
<span class="t" style="top:496.00px;font-size:16.2px;line-height:16.2px;color:#dadada;left:1510.40px;transform-origin:0 0;transform:scaleX(0.9547) translateX(-50%);">50</span>
<span class="t" style="top:496.00px;font-size:16.2px;line-height:16.2px;color:#dadada;left:1571.50px;transform-origin:0 0;transform:scaleX(0.9547) translateX(-50%);">60</span>
<span class="t" style="top:496.00px;font-size:16.2px;line-height:16.2px;color:#dadada;left:1632.60px;transform-origin:0 0;transform:scaleX(0.9547) translateX(-50%);">70</span>
<span class="t" style="top:496.00px;font-size:16.2px;line-height:16.2px;color:#dadada;left:1693.70px;transform-origin:0 0;transform:scaleX(0.9547) translateX(-50%);">80</span>
<span class="t" style="top:496.00px;font-size:16.2px;line-height:16.2px;color:#dadada;left:1754.80px;transform-origin:0 0;transform:scaleX(0.9547) translateX(-50%);">90</span>
<span class="t" style="top:496.00px;font-size:16.2px;line-height:16.2px;color:#dadada;left:1815.90px;transform-origin:0 0;transform:scaleX(0.9550) translateX(-50%);">100</span>
<span class="t" style="top:130.60px;font-size:16px;line-height:16px;color:#dadada;left:1496.30px;transform-origin:0 0;transform:scaleX(0.9733) translateX(-50%);">Gamma Log/Log</span>
<span class="t" style="top:124.40px;font-size:45px;line-height:45px;color:#f2f2f2;left:101.50px;transform-origin:0 0;transform:scaleX(0.8861);-webkit-text-stroke:0.3px #f2f2f2;">Grayscale</span>
<span class="t" style="top:528.00px;font-size:31.8px;line-height:31.8px;color:#f2f2f2;left:166.80px;transform-origin:0 0;transform:scaleX(0.9891);-webkit-text-stroke:0.25px #f2f2f2;">Avg dE2000: 0,6</span>
<span class="t" style="top:528.00px;font-size:31.8px;line-height:31.8px;color:#f2f2f2;left:605.50px;transform-origin:0 0;transform:scaleX(0.9495);-webkit-text-stroke:0.25px #f2f2f2;">Avg CCT: 6455</span>
<div style="left:930px;top:520px;width:439.6px;height:50px;overflow:hidden"><span class="t" style="top:8.00px;font-size:31.8px;line-height:31.8px;color:#f2f2f2;left:4.50px;transform-origin:0 0;transform:scaleX(1.0205);-webkit-text-stroke:0.25px #f2f2f2;">Contrast Ratio: 406220971828</span></div>
<span class="t" style="top:528.00px;font-size:31.8px;line-height:31.8px;color:#f2f2f2;left:1461.50px;transform-origin:0 0;transform:scaleX(1.0144);-webkit-text-stroke:0.25px #f2f2f2;">Total Gamma: 2,19</span>
<div style="left:77px;top:575.2px;width:1774px;height:139px;background:#000"></div>
<div style="left:359.0px;top:581px;width:106px;height:109.6px;box-sizing:border-box;border:2px solid #e6e6e6;background:linear-gradient(#000000 50%,#000000 50%)"></div>
<span class="t" style="top:694.90px;font-size:13.6px;line-height:13.6px;color:#f0f0f0;left:412.10px;transform-origin:0 0;transform:translateX(-50%);">0</span>
<div style="left:481.5px;top:581px;width:106px;height:109.6px;box-sizing:border-box;border:2px solid #e6e6e6;background:linear-gradient(#1a1a1a 50%,#1c1c1c 50%)"></div>
<span class="t" style="top:694.90px;font-size:13.6px;line-height:13.6px;color:#f0f0f0;left:534.60px;transform-origin:0 0;transform:translateX(-50%);">10</span>
<div style="left:604.0px;top:581px;width:106px;height:109.6px;box-sizing:border-box;border:2px solid #e6e6e6;background:linear-gradient(#333333 50%,#343434 50%)"></div>
<span class="t" style="top:694.90px;font-size:13.6px;line-height:13.6px;color:#f0f0f0;left:657.10px;transform-origin:0 0;transform:translateX(-50%);">20</span>
<div style="left:726.5px;top:581px;width:106px;height:109.6px;box-sizing:border-box;border:2px solid #e6e6e6;background:linear-gradient(#4d4d4d 50%,#4e4e4e 50%)"></div>
<span class="t" style="top:694.90px;font-size:13.6px;line-height:13.6px;color:#f0f0f0;left:779.60px;transform-origin:0 0;transform:translateX(-50%);">30</span>
<div style="left:849.0px;top:581px;width:106px;height:109.6px;box-sizing:border-box;border:2px solid #e6e6e6;background:linear-gradient(#676767 50%,#666666 50%)"></div>
<span class="t" style="top:694.90px;font-size:13.6px;line-height:13.6px;color:#f0f0f0;left:902.10px;transform-origin:0 0;transform:translateX(-50%);">40</span>
<div style="left:971.5px;top:581px;width:106px;height:109.6px;box-sizing:border-box;border:2px solid #e6e6e6;background:linear-gradient(#828282 50%,#808080 50%)"></div>
<span class="t" style="top:694.90px;font-size:13.6px;line-height:13.6px;color:#f0f0f0;left:1024.60px;transform-origin:0 0;transform:translateX(-50%);">50</span>
<div style="left:1094.0px;top:581px;width:106px;height:109.6px;box-sizing:border-box;border:2px solid #e6e6e6;background:linear-gradient(#9b9a9a 50%,#999999 50%)"></div>
<span class="t" style="top:694.90px;font-size:13.6px;line-height:13.6px;color:#f0f0f0;left:1147.10px;transform-origin:0 0;transform:translateX(-50%);">60</span>
<div style="left:1216.5px;top:581px;width:106px;height:109.6px;box-sizing:border-box;border:2px solid #e6e6e6;background:linear-gradient(#b5b4b2 50%,#b3b3b3 50%)"></div>
<span class="t" style="top:694.90px;font-size:13.6px;line-height:13.6px;color:#f0f0f0;left:1269.60px;transform-origin:0 0;transform:translateX(-50%);">70</span>
<div style="left:1339.0px;top:581px;width:106px;height:109.6px;box-sizing:border-box;border:2px solid #e6e6e6;background:linear-gradient(#cdcdcd 50%,#cccccc 50%)"></div>
<span class="t" style="top:694.90px;font-size:13.6px;line-height:13.6px;color:#f0f0f0;left:1392.10px;transform-origin:0 0;transform:translateX(-50%);">80</span>
<div style="left:1461.5px;top:581px;width:106px;height:109.6px;box-sizing:border-box;border:2px solid #e6e6e6;background:linear-gradient(#e6e6e6 50%,#e5e5e5 50%)"></div>
<span class="t" style="top:694.90px;font-size:13.6px;line-height:13.6px;color:#f0f0f0;left:1514.60px;transform-origin:0 0;transform:translateX(-50%);">90</span>
<div style="left:1584.0px;top:581px;width:106px;height:109.6px;box-sizing:border-box;border:2px solid #e6e6e6;background:linear-gradient(#ffffff 50%,#ffffff 50%)"></div>
<span class="t" style="top:694.90px;font-size:13.6px;line-height:13.6px;color:#f0f0f0;left:1637.10px;transform-origin:0 0;transform:translateX(-50%);">100</span>
<div style="left:347.3px;top:604.8px;width:0;height:0"><span class="t" style="left:0;top:0;font-size:13.4px;line-height:14px;color:#f0f0f0;transform:translate(-50%,-50%) rotate(-90deg);transform-origin:50% 50%">Actual</span></div>
<div style="left:347.3px;top:666.3px;width:0;height:0"><span class="t" style="left:0;top:0;font-size:13.4px;line-height:14px;color:#f0f0f0;transform:translate(-50%,-50%) rotate(-90deg);transform-origin:50% 50%">Target</span></div>
<span class="t" style="top:745.80px;font-size:30.8px;line-height:30.8px;color:#f2f2f2;left:91.00px;transform-origin:0 0;transform:scaleX(1.0377);-webkit-text-stroke:0.25px #f2f2f2;">Current Reading</span>
<span class="t" style="top:793.80px;font-size:26.8px;line-height:26.8px;color:#f2f2f2;left:91.50px;transform-origin:0 0;transform:scaleX(0.9932);-webkit-text-stroke:0.25px #f2f2f2;">x: 0,3128</span>
<span class="t" style="top:837.10px;font-size:26.8px;line-height:26.8px;color:#f2f2f2;left:91.50px;transform-origin:0 0;transform:scaleX(0.9932);-webkit-text-stroke:0.25px #f2f2f2;">y: 0,3285</span>
<span class="t" style="top:880.40px;font-size:26.8px;line-height:26.8px;color:#f2f2f2;left:91.50px;transform-origin:0 0;transform:scaleX(1.0067);-webkit-text-stroke:0.25px #f2f2f2;">fL: 118,56</span>
<span class="t" style="top:923.70px;font-size:26.8px;line-height:26.8px;color:#f2f2f2;left:91.50px;transform-origin:0 0;transform:scaleX(1.0315);-webkit-text-stroke:0.25px #f2f2f2;">cd/m²: 406,22</span>
<svg style="left:420px;top:733px" width="320" height="237" viewBox="420 733 320 237"><rect x="424.6" y="737.5" width="311.5" height="228.4" fill="#f3f3f3"/><rect x="426.1" y="739" width="308.5" height="225.7" fill="#e2e2e2"/><rect x="430.2" y="743" width="300.2" height="219.6" fill="#efefef"/><rect x="432" y="744.8" width="296.4" height="216.7" fill="#1e1e1e"/><rect x="432.8" y="745.8" width="295.2" height="215" fill="#303030"/></svg>
<div style="left:471.8px;top:747.9px;width:254.4px;height:183.6px;overflow:hidden;background:#fff"><div style="left:-30px;top:-30px;width:314.4px;height:243.6px;background:radial-gradient(ellipse 190px 150px at 156px 124px,#fff 0,rgba(255,255,255,0.85) 18%,rgba(255,255,255,0.45) 50%,rgba(255,255,255,0.12) 80%,rgba(255,255,255,0) 100%),conic-gradient(from 0deg at 156px 124px,#b4ffb8 0deg,#ecffb4 32deg,#ffffbc 47deg,#ffe2ac 56deg,#ffcaa8 72deg,#ffa8a8 94deg,#ff86b2 123deg,#ff9cd6 143deg,#f8acf8 178deg,#ccb8ff 213deg,#90baff 236deg,#94d2ff 253deg,#92f6ff 271deg,#86ffe2 289deg,#7af4c2 307deg,#96fabc 328deg,#b4ffb8 360deg);filter:blur(7px)"></div><div style="left:0;top:0;width:254.4px;height:183.6px;box-shadow:inset 0 1.5px 1.5px rgba(60,60,60,.5), inset 1px 0 1px rgba(60,60,60,.3), inset -1px 0 1px rgba(60,60,60,.3)"></div></div>
<span class="t" style="top:754.40px;font-size:16.3px;line-height:16.3px;color:#d8d8d8;right:1455.40px;transform-origin:100% 0;transform:scaleX(0.9463);">0,35</span>
<span class="t" style="top:791.20px;font-size:16.3px;line-height:16.3px;color:#d8d8d8;right:1455.40px;transform-origin:100% 0;transform:scaleX(0.9463);">0,34</span>
<span class="t" style="top:828.00px;font-size:16.3px;line-height:16.3px;color:#d8d8d8;right:1455.40px;transform-origin:100% 0;transform:scaleX(0.9463);">0,33</span>
<span class="t" style="top:864.80px;font-size:16.3px;line-height:16.3px;color:#d8d8d8;right:1455.40px;transform-origin:100% 0;transform:scaleX(0.9463);">0,32</span>
<span class="t" style="top:901.60px;font-size:16.3px;line-height:16.3px;color:#d8d8d8;right:1455.40px;transform-origin:100% 0;transform:scaleX(0.9463);">0,31</span>
<span class="t" style="top:940.00px;font-size:16.3px;line-height:16.3px;color:#d8d8d8;left:482.10px;transform-origin:0 0;transform:scaleX(0.9463) translateX(-50%);">0,29</span>
<span class="t" style="top:940.00px;font-size:16.3px;line-height:16.3px;color:#d8d8d8;left:532.80px;transform-origin:0 0;transform:scaleX(0.9496) translateX(-50%);">0,3</span>
<span class="t" style="top:940.00px;font-size:16.3px;line-height:16.3px;color:#d8d8d8;left:583.50px;transform-origin:0 0;transform:scaleX(0.9463) translateX(-50%);">0,31</span>
<span class="t" style="top:940.00px;font-size:16.3px;line-height:16.3px;color:#d8d8d8;left:634.20px;transform-origin:0 0;transform:scaleX(0.9463) translateX(-50%);">0,32</span>
<span class="t" style="top:940.00px;font-size:16.3px;line-height:16.3px;color:#d8d8d8;left:684.90px;transform-origin:0 0;transform:scaleX(0.9463) translateX(-50%);">0,33</span>
<svg style="left:420px;top:735px" width="320" height="235" viewBox="420 735 320 235"><clipPath id="ciec"><rect x="471.8" y="747.9" width="254.4" height="183.6"/></clipPath><path clip-path="url(#ciec)" d="M500 935.2L505.9 930.4Q597.5 855.3 725.1 778.7L731 775.1" fill="none" stroke="#000" stroke-width="3.1"/><path d="M465 762.7h6.5" stroke="#d8d8d8" stroke-width="1.5"/><path d="M465 799.5h6.5" stroke="#d8d8d8" stroke-width="1.5"/><path d="M465 836.3h6.5" stroke="#d8d8d8" stroke-width="1.5"/><path d="M465 873.1h6.5" stroke="#d8d8d8" stroke-width="1.5"/><path d="M465 909.9h6.5" stroke="#d8d8d8" stroke-width="1.5"/><path d="M482.1 931.5v6" stroke="#d8d8d8" stroke-width="1.5"/><path d="M532.8 931.5v6" stroke="#d8d8d8" stroke-width="1.5"/><path d="M583.5 931.5v6" stroke="#d8d8d8" stroke-width="1.5"/><path d="M634.2 931.5v6" stroke="#d8d8d8" stroke-width="1.5"/><path d="M684.9 931.5v6" stroke="#d8d8d8" stroke-width="1.5"/><circle cx="702.4" cy="823.2" r="4.6" fill="#000"/><rect x="590.6" y="831.7" width="14.4" height="14.4" fill="#fff" stroke="#000" stroke-width="1.5"/><circle cx="599.3" cy="827.4" r="3.9" fill="#1f1f1f" stroke="#000" stroke-width="0.95"/><circle cx="601.2" cy="828.0" r="3.9" fill="#3a3a3a" stroke="#000" stroke-width="0.95"/><circle cx="603.2" cy="829.3" r="3.9" fill="#555" stroke="#000" stroke-width="0.95"/><circle cx="604.8" cy="831.0" r="3.9" fill="#707070" stroke="#000" stroke-width="0.95"/><circle cx="605.5" cy="833.0" r="3.9" fill="#8c8c8c" stroke="#000" stroke-width="0.95"/><circle cx="605.0" cy="835.2" r="3.9" fill="#a6a6a6" stroke="#000" stroke-width="0.95"/><circle cx="603.6" cy="836.6" r="3.9" fill="#c0c0c0" stroke="#000" stroke-width="0.95"/><circle cx="602.0" cy="837.6" r="3.9" fill="#d6d6d6" stroke="#000" stroke-width="0.95"/><circle cx="600.4" cy="838.4" r="3.9" fill="#ececec" stroke="#000" stroke-width="0.95"/><circle cx="598.2" cy="841" r="3.9" fill="#fff" stroke="#000" stroke-width="0.95"/></svg>
<svg style="left:740px;top:720px" width="930" height="230" viewBox="740 720 930 230"><rect x="743.7" y="722.9" width="920.4" height="223.4" fill="#050505"/></svg>
<div style="left:745px;top:724px;width:917.2px;height:29.8px;background:linear-gradient(#303030 0,#2b2b2b 51.5%,#1b1b1b 52.5%,#131313 100%)"></div>
<span class="t" style="top:733.00px;font-size:16.6px;line-height:16.6px;color:#f4f4f4;left:940.80px;transform-origin:0 0;transform:translateX(-50%);">0</span>
<span class="t" style="top:733.00px;font-size:16.6px;line-height:16.6px;color:#f4f4f4;left:1009.55px;transform-origin:0 0;transform:translateX(-50%);">10</span>
<span class="t" style="top:733.00px;font-size:16.6px;line-height:16.6px;color:#f4f4f4;left:1078.30px;transform-origin:0 0;transform:translateX(-50%);">20</span>
<span class="t" style="top:733.00px;font-size:16.6px;line-height:16.6px;color:#f4f4f4;left:1147.05px;transform-origin:0 0;transform:translateX(-50%);">30</span>
<span class="t" style="top:733.00px;font-size:16.6px;line-height:16.6px;color:#f4f4f4;left:1215.80px;transform-origin:0 0;transform:translateX(-50%);">40</span>
<span class="t" style="top:733.00px;font-size:16.6px;line-height:16.6px;color:#f4f4f4;left:1284.55px;transform-origin:0 0;transform:translateX(-50%);">50</span>
<span class="t" style="top:733.00px;font-size:16.6px;line-height:16.6px;color:#f4f4f4;left:1353.30px;transform-origin:0 0;transform:translateX(-50%);">60</span>
<span class="t" style="top:733.00px;font-size:16.6px;line-height:16.6px;color:#f4f4f4;left:1422.05px;transform-origin:0 0;transform:translateX(-50%);">70</span>
<span class="t" style="top:733.00px;font-size:16.6px;line-height:16.6px;color:#f4f4f4;left:1490.80px;transform-origin:0 0;transform:translateX(-50%);">80</span>
<span class="t" style="top:733.00px;font-size:16.6px;line-height:16.6px;color:#f4f4f4;left:1559.55px;transform-origin:0 0;transform:translateX(-50%);">90</span>
<span class="t" style="top:733.00px;font-size:16.6px;line-height:16.6px;color:#f4f4f4;left:1628.30px;transform-origin:0 0;transform:translateX(-50%);">100</span>
<div style="left:745px;top:753.70px;width:917.2px;height:27.45px;background:#424242;box-shadow:inset 0 1px 0 rgba(255,255,255,.05), inset 0 -1px 0 rgba(0,0,0,.12)"></div>
<span class="t" style="top:760.80px;font-size:17.4px;line-height:17.4px;color:#f4f4f4;font-weight:bold;left:757.40px;transform-origin:0 0;transform:scaleX(0.9426);">x: CIE31</span>
<span class="t" style="top:761.80px;font-size:16.6px;line-height:16.6px;color:#f0f0f0;left:911.00px;transform-origin:0 0;transform:scaleX(0.9831);">0,33</span>
<span class="t" style="top:761.80px;font-size:16.6px;line-height:16.6px;color:#f0f0f0;left:979.75px;transform-origin:0 0;transform:scaleX(0.9831);">0,31</span>
<span class="t" style="top:761.80px;font-size:16.6px;line-height:16.6px;color:#f0f0f0;left:1048.50px;transform-origin:0 0;transform:scaleX(0.9831);">0,31</span>
<span class="t" style="top:761.80px;font-size:16.6px;line-height:16.6px;color:#f0f0f0;left:1117.25px;transform-origin:0 0;transform:scaleX(0.9831);">0,31</span>
<span class="t" style="top:761.80px;font-size:16.6px;line-height:16.6px;color:#f0f0f0;left:1186.00px;transform-origin:0 0;transform:scaleX(0.9831);">0,31</span>
<span class="t" style="top:761.80px;font-size:16.6px;line-height:16.6px;color:#f0f0f0;left:1254.75px;transform-origin:0 0;transform:scaleX(0.9831);">0,31</span>
<span class="t" style="top:761.80px;font-size:16.6px;line-height:16.6px;color:#f0f0f0;left:1323.50px;transform-origin:0 0;transform:scaleX(0.9831);">0,31</span>
<span class="t" style="top:761.80px;font-size:16.6px;line-height:16.6px;color:#f0f0f0;left:1392.25px;transform-origin:0 0;transform:scaleX(0.9831);">0,31</span>
<span class="t" style="top:761.80px;font-size:16.6px;line-height:16.6px;color:#f0f0f0;left:1461.00px;transform-origin:0 0;transform:scaleX(0.9831);">0,31</span>
<span class="t" style="top:761.80px;font-size:16.6px;line-height:16.6px;color:#f0f0f0;left:1529.75px;transform-origin:0 0;transform:scaleX(0.9831);">0,31</span>
<span class="t" style="top:761.80px;font-size:16.6px;line-height:16.6px;color:#f0f0f0;left:1598.50px;transform-origin:0 0;transform:scaleX(0.9831);">0,31</span>
<div style="left:745px;top:781.10px;width:917.2px;height:27.45px;background:#7f7f7f;box-shadow:inset 0 1px 0 rgba(255,255,255,.05), inset 0 -1px 0 rgba(0,0,0,.12)"></div>
<span class="t" style="top:788.20px;font-size:17.4px;line-height:17.4px;color:#f4f4f4;font-weight:bold;left:757.40px;transform-origin:0 0;transform:scaleX(0.9426);">y: CIE31</span>
<span class="t" style="top:789.20px;font-size:16.6px;line-height:16.6px;color:#f0f0f0;left:911.00px;transform-origin:0 0;transform:scaleX(0.9831);">0,33</span>
<span class="t" style="top:789.20px;font-size:16.6px;line-height:16.6px;color:#f0f0f0;left:979.75px;transform-origin:0 0;transform:scaleX(0.9831);">0,33</span>
<span class="t" style="top:789.20px;font-size:16.6px;line-height:16.6px;color:#f0f0f0;left:1048.50px;transform-origin:0 0;transform:scaleX(0.9831);">0,33</span>
<span class="t" style="top:789.20px;font-size:16.6px;line-height:16.6px;color:#f0f0f0;left:1117.25px;transform-origin:0 0;transform:scaleX(0.9831);">0,33</span>
<span class="t" style="top:789.20px;font-size:16.6px;line-height:16.6px;color:#f0f0f0;left:1186.00px;transform-origin:0 0;transform:scaleX(0.9831);">0,33</span>
<span class="t" style="top:789.20px;font-size:16.6px;line-height:16.6px;color:#f0f0f0;left:1254.75px;transform-origin:0 0;transform:scaleX(0.9831);">0,33</span>
<span class="t" style="top:789.20px;font-size:16.6px;line-height:16.6px;color:#f0f0f0;left:1323.50px;transform-origin:0 0;transform:scaleX(0.9831);">0,33</span>
<span class="t" style="top:789.20px;font-size:16.6px;line-height:16.6px;color:#f0f0f0;left:1392.25px;transform-origin:0 0;transform:scaleX(0.9831);">0,33</span>
<span class="t" style="top:789.20px;font-size:16.6px;line-height:16.6px;color:#f0f0f0;left:1461.00px;transform-origin:0 0;transform:scaleX(0.9831);">0,33</span>
<span class="t" style="top:789.20px;font-size:16.6px;line-height:16.6px;color:#f0f0f0;left:1529.75px;transform-origin:0 0;transform:scaleX(0.9831);">0,33</span>
<span class="t" style="top:789.20px;font-size:16.6px;line-height:16.6px;color:#f0f0f0;left:1598.50px;transform-origin:0 0;transform:scaleX(0.9831);">0,33</span>
<div style="left:745px;top:808.50px;width:917.2px;height:27.45px;background:#424242;box-shadow:inset 0 1px 0 rgba(255,255,255,.05), inset 0 -1px 0 rgba(0,0,0,.12)"></div>
<span class="t" style="top:815.60px;font-size:17.4px;line-height:17.4px;color:#f4f4f4;font-weight:bold;left:757.40px;transform-origin:0 0;transform:scaleX(0.9217);">Y</span>
<span class="t" style="top:816.60px;font-size:16.6px;line-height:16.6px;color:#f0f0f0;left:911.00px;transform-origin:0 0;transform:scaleX(0.9831);">0,00</span>
<span class="t" style="top:816.60px;font-size:16.6px;line-height:16.6px;color:#f0f0f0;left:979.75px;transform-origin:0 0;transform:scaleX(0.9831);">3,49</span>
<span class="t" style="top:816.60px;font-size:16.6px;line-height:16.6px;color:#f0f0f0;left:1048.50px;transform-origin:0 0;transform:scaleX(0.9824);">13,36</span>
<span class="t" style="top:816.60px;font-size:16.6px;line-height:16.6px;color:#f0f0f0;left:1117.25px;transform-origin:0 0;transform:scaleX(0.9824);">28,97</span>
<span class="t" style="top:816.60px;font-size:16.6px;line-height:16.6px;color:#f0f0f0;left:1186.00px;transform-origin:0 0;transform:scaleX(0.9824);">54,89</span>
<span class="t" style="top:816.60px;font-size:16.6px;line-height:16.6px;color:#f0f0f0;left:1254.75px;transform-origin:0 0;transform:scaleX(0.9824);">87,98</span>
<span class="t" style="top:816.60px;font-size:16.6px;line-height:16.6px;color:#f0f0f0;left:1323.50px;transform-origin:0 0;transform:scaleX(0.9820);">130,40</span>
<span class="t" style="top:816.60px;font-size:16.6px;line-height:16.6px;color:#f0f0f0;left:1392.25px;transform-origin:0 0;transform:scaleX(0.9820);">181,74</span>
<span class="t" style="top:816.60px;font-size:16.6px;line-height:16.6px;color:#f0f0f0;left:1461.00px;transform-origin:0 0;transform:scaleX(0.9820);">247,54</span>
<span class="t" style="top:816.60px;font-size:16.6px;line-height:16.6px;color:#f0f0f0;left:1529.75px;transform-origin:0 0;transform:scaleX(0.9820);">321,88</span>
<span class="t" style="top:816.60px;font-size:16.6px;line-height:16.6px;color:#f0f0f0;left:1598.50px;transform-origin:0 0;transform:scaleX(0.9820);">406,22</span>
<div style="left:745px;top:835.90px;width:917.2px;height:27.45px;background:#7f7f7f;box-shadow:inset 0 1px 0 rgba(255,255,255,.05), inset 0 -1px 0 rgba(0,0,0,.12)"></div>
<span class="t" style="top:843.00px;font-size:17.4px;line-height:17.4px;color:#f4f4f4;font-weight:bold;left:757.40px;transform-origin:0 0;transform:scaleX(1.0032);">Target Y</span>
<span class="t" style="top:844.00px;font-size:16.6px;line-height:16.6px;color:#f0f0f0;left:911.00px;transform-origin:0 0;transform:scaleX(0.9831);">0,00</span>
<span class="t" style="top:844.00px;font-size:16.6px;line-height:16.6px;color:#f0f0f0;left:979.75px;transform-origin:0 0;transform:scaleX(0.9831);">4,20</span>
<span class="t" style="top:844.00px;font-size:16.6px;line-height:16.6px;color:#f0f0f0;left:1048.50px;transform-origin:0 0;transform:scaleX(0.9824);">13,45</span>
<span class="t" style="top:844.00px;font-size:16.6px;line-height:16.6px;color:#f0f0f0;left:1117.25px;transform-origin:0 0;transform:scaleX(0.9824);">29,36</span>
<span class="t" style="top:844.00px;font-size:16.6px;line-height:16.6px;color:#f0f0f0;left:1186.00px;transform-origin:0 0;transform:scaleX(0.9824);">53,97</span>
<span class="t" style="top:844.00px;font-size:16.6px;line-height:16.6px;color:#f0f0f0;left:1254.75px;transform-origin:0 0;transform:scaleX(0.9824);">87,69</span>
<span class="t" style="top:844.00px;font-size:16.6px;line-height:16.6px;color:#f0f0f0;left:1323.50px;transform-origin:0 0;transform:scaleX(0.9820);">129,40</span>
<span class="t" style="top:844.00px;font-size:16.6px;line-height:16.6px;color:#f0f0f0;left:1392.25px;transform-origin:0 0;transform:scaleX(0.9820);">180,85</span>
<span class="t" style="top:844.00px;font-size:16.6px;line-height:16.6px;color:#f0f0f0;left:1461.00px;transform-origin:0 0;transform:scaleX(0.9820);">245,29</span>
<span class="t" style="top:844.00px;font-size:16.6px;line-height:16.6px;color:#f0f0f0;left:1529.75px;transform-origin:0 0;transform:scaleX(0.9820);">321,44</span>
<span class="t" style="top:844.00px;font-size:16.6px;line-height:16.6px;color:#f0f0f0;left:1598.50px;transform-origin:0 0;transform:scaleX(0.9820);">406,22</span>
<div style="left:745px;top:863.30px;width:917.2px;height:27.45px;background:#424242;box-shadow:inset 0 1px 0 rgba(255,255,255,.05), inset 0 -1px 0 rgba(0,0,0,.12)"></div>
<span class="t" style="top:870.40px;font-size:17.4px;line-height:17.4px;color:#f4f4f4;font-weight:bold;left:757.40px;transform-origin:0 0;transform:scaleX(0.9963);">Gamma Log/Log</span>
<span class="t" style="top:871.40px;font-size:16.6px;line-height:16.6px;color:#f0f0f0;left:911.00px;transform-origin:0 0;transform:scaleX(0.9831);">1,28</span>
<span class="t" style="top:871.40px;font-size:16.6px;line-height:16.6px;color:#f0f0f0;left:979.75px;transform-origin:0 0;transform:scaleX(0.9831);">2,08</span>
<span class="t" style="top:871.40px;font-size:16.6px;line-height:16.6px;color:#f0f0f0;left:1048.50px;transform-origin:0 0;transform:scaleX(0.9831);">2,12</span>
<span class="t" style="top:871.40px;font-size:16.6px;line-height:16.6px;color:#f0f0f0;left:1117.25px;transform-origin:0 0;transform:scaleX(0.9831);">2,18</span>
<span class="t" style="top:871.40px;font-size:16.6px;line-height:16.6px;color:#f0f0f0;left:1186.00px;transform-origin:0 0;transform:scaleX(0.9831);">2,18</span>
<span class="t" style="top:871.40px;font-size:16.6px;line-height:16.6px;color:#f0f0f0;left:1254.75px;transform-origin:0 0;transform:scaleX(0.9831);">2,22</span>
<span class="t" style="top:871.40px;font-size:16.6px;line-height:16.6px;color:#f0f0f0;left:1323.50px;transform-origin:0 0;transform:scaleX(0.9831);">2,22</span>
<span class="t" style="top:871.40px;font-size:16.6px;line-height:16.6px;color:#f0f0f0;left:1392.25px;transform-origin:0 0;transform:scaleX(0.9831);">2,24</span>
<span class="t" style="top:871.40px;font-size:16.6px;line-height:16.6px;color:#f0f0f0;left:1461.00px;transform-origin:0 0;transform:scaleX(0.9831);">2,22</span>
<span class="t" style="top:871.40px;font-size:16.6px;line-height:16.6px;color:#f0f0f0;left:1529.75px;transform-origin:0 0;transform:scaleX(0.9831);">2,26</span>
<span class="t" style="top:871.40px;font-size:16.6px;line-height:16.6px;color:#f0f0f0;left:1598.50px;transform-origin:0 0;transform:scaleX(0.9831);">2,27</span>
<div style="left:745px;top:890.70px;width:917.2px;height:27.45px;background:#7f7f7f;box-shadow:inset 0 1px 0 rgba(255,255,255,.05), inset 0 -1px 0 rgba(0,0,0,.12)"></div>
<span class="t" style="top:897.80px;font-size:17.4px;line-height:17.4px;color:#f4f4f4;font-weight:bold;left:757.40px;transform-origin:0 0;transform:scaleX(0.9007);">CCT</span>
<span class="t" style="top:898.80px;font-size:16.6px;line-height:16.6px;color:#f0f0f0;left:911.00px;transform-origin:0 0;transform:scaleX(0.9819);">5456,00</span>
<span class="t" style="top:898.80px;font-size:16.6px;line-height:16.6px;color:#f0f0f0;left:979.75px;transform-origin:0 0;transform:scaleX(0.9819);">6493,00</span>
<span class="t" style="top:898.80px;font-size:16.6px;line-height:16.6px;color:#f0f0f0;left:1048.50px;transform-origin:0 0;transform:scaleX(0.9819);">6460,00</span>
<span class="t" style="top:898.80px;font-size:16.6px;line-height:16.6px;color:#f0f0f0;left:1117.25px;transform-origin:0 0;transform:scaleX(0.9819);">6443,00</span>
<span class="t" style="top:898.80px;font-size:16.6px;line-height:16.6px;color:#f0f0f0;left:1186.00px;transform-origin:0 0;transform:scaleX(0.9819);">6460,00</span>
<span class="t" style="top:898.80px;font-size:16.6px;line-height:16.6px;color:#f0f0f0;left:1254.75px;transform-origin:0 0;transform:scaleX(0.9819);">6415,00</span>
<span class="t" style="top:898.80px;font-size:16.6px;line-height:16.6px;color:#f0f0f0;left:1323.50px;transform-origin:0 0;transform:scaleX(0.9819);">6430,00</span>
<span class="t" style="top:898.80px;font-size:16.6px;line-height:16.6px;color:#f0f0f0;left:1392.25px;transform-origin:0 0;transform:scaleX(0.9819);">6422,00</span>
<span class="t" style="top:898.80px;font-size:16.6px;line-height:16.6px;color:#f0f0f0;left:1461.00px;transform-origin:0 0;transform:scaleX(0.9819);">6447,00</span>
<span class="t" style="top:898.80px;font-size:16.6px;line-height:16.6px;color:#f0f0f0;left:1529.75px;transform-origin:0 0;transform:scaleX(0.9819);">6478,00</span>
<span class="t" style="top:898.80px;font-size:16.6px;line-height:16.6px;color:#f0f0f0;left:1598.50px;transform-origin:0 0;transform:scaleX(0.9819);">6504,00</span>
<div style="left:745px;top:918.10px;width:917.2px;height:28.30px;background:#424242;box-shadow:inset 0 1px 0 rgba(255,255,255,.05), inset 0 -1px 0 rgba(0,0,0,.12)"></div>
<span class="t" style="top:925.20px;font-size:17.4px;line-height:17.4px;color:#f4f4f4;font-weight:bold;left:757.40px;transform-origin:0 0;transform:scaleX(0.9937);">ΔE 2000</span>
<span class="t" style="top:926.20px;font-size:16.6px;line-height:16.6px;color:#f0f0f0;left:911.00px;transform-origin:0 0;transform:scaleX(0.9831);">0,00</span>
<span class="t" style="top:926.20px;font-size:16.6px;line-height:16.6px;color:#f0f0f0;left:979.75px;transform-origin:0 0;transform:scaleX(0.9831);">0,95</span>
<span class="t" style="top:926.20px;font-size:16.6px;line-height:16.6px;color:#f0f0f0;left:1048.50px;transform-origin:0 0;transform:scaleX(0.9831);">0,72</span>
<span class="t" style="top:926.20px;font-size:16.6px;line-height:16.6px;color:#f0f0f0;left:1117.25px;transform-origin:0 0;transform:scaleX(0.9831);">0,42</span>
<span class="t" style="top:926.20px;font-size:16.6px;line-height:16.6px;color:#f0f0f0;left:1186.00px;transform-origin:0 0;transform:scaleX(0.9831);">0,96</span>
<span class="t" style="top:926.20px;font-size:16.6px;line-height:16.6px;color:#f0f0f0;left:1254.75px;transform-origin:0 0;transform:scaleX(0.9831);">1,01</span>
<span class="t" style="top:926.20px;font-size:16.6px;line-height:16.6px;color:#f0f0f0;left:1323.50px;transform-origin:0 0;transform:scaleX(0.9831);">0,48</span>
<span class="t" style="top:926.20px;font-size:16.6px;line-height:16.6px;color:#f0f0f0;left:1392.25px;transform-origin:0 0;transform:scaleX(0.9831);">0,58</span>
<span class="t" style="top:926.20px;font-size:16.6px;line-height:16.6px;color:#f0f0f0;left:1461.00px;transform-origin:0 0;transform:scaleX(0.9831);">0,51</span>
<span class="t" style="top:926.20px;font-size:16.6px;line-height:16.6px;color:#f0f0f0;left:1529.75px;transform-origin:0 0;transform:scaleX(0.9831);">0,27</span>
<span class="t" style="top:926.20px;font-size:16.6px;line-height:16.6px;color:#f0f0f0;left:1598.50px;transform-origin:0 0;transform:scaleX(0.9831);">0,45</span>
<div style="left:1.3px;top:969.2px;width:139.5px;height:68.6px;border-radius:4px;background:linear-gradient(#a8a8a8 0,#989898 3px,#8a8a8a 45%,#6a6a6a 75%,#5c5c5c 100%)"></div>
<div style="left:7.0px;top:974.5px;width:128px;height:40.6px;border-radius:4px;background:#000000;box-shadow:inset 0 1.5px 2px rgba(0,0,0,.35), 0 1px 0 rgba(255,255,255,.12)"></div>
<span class="t" style="top:1023.70px;font-size:11.4px;line-height:11.4px;color:#262626;font-weight:bold;left:70.90px;transform-origin:0 0;transform:translateX(-50%);">0</span>
<div style="left:143.2px;top:969.2px;width:139.5px;height:68.6px;border-radius:4px;background:linear-gradient(#a8a8a8 0,#989898 3px,#8a8a8a 45%,#6a6a6a 75%,#5c5c5c 100%)"></div>
<div style="left:148.8px;top:974.5px;width:128px;height:40.6px;border-radius:4px;background:#1b1b1b;box-shadow:inset 0 1.5px 2px rgba(0,0,0,.35), 0 1px 0 rgba(255,255,255,.12)"></div>
<span class="t" style="top:1023.70px;font-size:11.4px;line-height:11.4px;color:#262626;font-weight:bold;left:212.75px;transform-origin:0 0;transform:translateX(-50%);">10</span>
<div style="left:285.0px;top:969.2px;width:139.5px;height:68.6px;border-radius:4px;background:linear-gradient(#a8a8a8 0,#989898 3px,#8a8a8a 45%,#6a6a6a 75%,#5c5c5c 100%)"></div>
<div style="left:290.7px;top:974.5px;width:128px;height:40.6px;border-radius:4px;background:#343434;box-shadow:inset 0 1.5px 2px rgba(0,0,0,.35), 0 1px 0 rgba(255,255,255,.12)"></div>
<span class="t" style="top:1023.70px;font-size:11.4px;line-height:11.4px;color:#262626;font-weight:bold;left:354.60px;transform-origin:0 0;transform:translateX(-50%);">20</span>
<div style="left:426.8px;top:969.2px;width:139.5px;height:68.6px;border-radius:4px;background:linear-gradient(#a8a8a8 0,#989898 3px,#8a8a8a 45%,#6a6a6a 75%,#5c5c5c 100%)"></div>
<div style="left:432.5px;top:974.5px;width:128px;height:40.6px;border-radius:4px;background:#4e4e4e;box-shadow:inset 0 1.5px 2px rgba(0,0,0,.35), 0 1px 0 rgba(255,255,255,.12)"></div>
<span class="t" style="top:1023.70px;font-size:11.4px;line-height:11.4px;color:#262626;font-weight:bold;left:496.45px;transform-origin:0 0;transform:translateX(-50%);">30</span>
<div style="left:568.7px;top:969.2px;width:139.5px;height:68.6px;border-radius:4px;background:linear-gradient(#a8a8a8 0,#989898 3px,#8a8a8a 45%,#6a6a6a 75%,#5c5c5c 100%)"></div>
<div style="left:574.4px;top:974.5px;width:128px;height:40.6px;border-radius:4px;background:#686868;box-shadow:inset 0 1.5px 2px rgba(0,0,0,.35), 0 1px 0 rgba(255,255,255,.12)"></div>
<span class="t" style="top:1023.70px;font-size:11.4px;line-height:11.4px;color:#262626;font-weight:bold;left:638.30px;transform-origin:0 0;transform:translateX(-50%);">40</span>
<div style="left:710.5px;top:969.2px;width:139.5px;height:68.6px;border-radius:4px;background:linear-gradient(#a8a8a8 0,#989898 3px,#8a8a8a 45%,#6a6a6a 75%,#5c5c5c 100%)"></div>
<div style="left:716.2px;top:974.5px;width:128px;height:40.6px;border-radius:4px;background:#818181;box-shadow:inset 0 1.5px 2px rgba(0,0,0,.35), 0 1px 0 rgba(255,255,255,.12)"></div>
<span class="t" style="top:1023.70px;font-size:11.4px;line-height:11.4px;color:#262626;font-weight:bold;left:780.15px;transform-origin:0 0;transform:translateX(-50%);">50</span>
<div style="left:852.4px;top:969.2px;width:139.5px;height:68.6px;border-radius:4px;background:linear-gradient(#a8a8a8 0,#989898 3px,#8a8a8a 45%,#6a6a6a 75%,#5c5c5c 100%)"></div>
<div style="left:858.1px;top:974.5px;width:128px;height:40.6px;border-radius:4px;background:#9a9a9a;box-shadow:inset 0 1.5px 2px rgba(0,0,0,.35), 0 1px 0 rgba(255,255,255,.12)"></div>
<span class="t" style="top:1023.70px;font-size:11.4px;line-height:11.4px;color:#262626;font-weight:bold;left:922.00px;transform-origin:0 0;transform:translateX(-50%);">60</span>
<div style="left:994.2px;top:969.2px;width:139.5px;height:68.6px;border-radius:4px;background:linear-gradient(#a8a8a8 0,#989898 3px,#8a8a8a 45%,#6a6a6a 75%,#5c5c5c 100%)"></div>
<div style="left:999.9px;top:974.5px;width:128px;height:40.6px;border-radius:4px;background:#b4b4b4;box-shadow:inset 0 1.5px 2px rgba(0,0,0,.35), 0 1px 0 rgba(255,255,255,.12)"></div>
<span class="t" style="top:1023.70px;font-size:11.4px;line-height:11.4px;color:#262626;font-weight:bold;left:1063.85px;transform-origin:0 0;transform:translateX(-50%);">70</span>
<div style="left:1136.1px;top:969.2px;width:139.5px;height:68.6px;border-radius:4px;background:linear-gradient(#a8a8a8 0,#989898 3px,#8a8a8a 45%,#6a6a6a 75%,#5c5c5c 100%)"></div>
<div style="left:1141.8px;top:974.5px;width:128px;height:40.6px;border-radius:4px;background:#cdcdcd;box-shadow:inset 0 1.5px 2px rgba(0,0,0,.35), 0 1px 0 rgba(255,255,255,.12)"></div>
<span class="t" style="top:1023.70px;font-size:11.4px;line-height:11.4px;color:#262626;font-weight:bold;left:1205.70px;transform-origin:0 0;transform:translateX(-50%);">80</span>
<div style="left:1277.9px;top:969.2px;width:139.5px;height:68.6px;border-radius:4px;background:linear-gradient(#a8a8a8 0,#989898 3px,#8a8a8a 45%,#6a6a6a 75%,#5c5c5c 100%)"></div>
<div style="left:1283.6px;top:974.5px;width:128px;height:40.6px;border-radius:4px;background:#e6e6e6;box-shadow:inset 0 1.5px 2px rgba(0,0,0,.35), 0 1px 0 rgba(255,255,255,.12)"></div>
<span class="t" style="top:1023.70px;font-size:11.4px;line-height:11.4px;color:#262626;font-weight:bold;left:1347.55px;transform-origin:0 0;transform:translateX(-50%);">90</span>
<div style="left:1419.8px;top:969.2px;width:139.5px;height:68.6px;border-radius:4px;background:linear-gradient(#161616 0,#262626 5px,#2e2e2e 100%)"></div>
<div style="left:1425.5px;top:974.5px;width:128px;height:40.6px;border-radius:4px;background:#ffffff;"></div>
<span class="t" style="top:1023.70px;font-size:11.4px;line-height:11.4px;color:#fff;font-weight:bold;left:1489.40px;transform-origin:0 0;transform:translateX(-50%);">100</span>
<div style="left:1618.4px;top:969.2px;width:302px;height:69.8px;background:#1c1c1c"></div>
<div style="left:1563.3px;top:969.2px;width:54px;height:20.2px;border-radius:5px 5px 0 0;background:linear-gradient(#a4a4a4,#858585)"></div>
<div style="left:1581.7px;top:970.0px;width:17.0px;height:17.0px;border-radius:50%;background:linear-gradient(#7c7c7c,#a4a4a4)"></div>
<svg style="left:1584.2px;top:974px" width="12" height="8" viewBox="0 0 12 8"><path d="M6 0.8L11.2 6.6H0.8z" fill="#2c2c2c"/></svg>
<div style="left:1563.3px;top:990.8px;width:54px;height:47.4px;border-radius:0 0 5px 5px;background:linear-gradient(#8c8c8c,#5e5e5e)"></div>
<div style="left:1573.3px;top:996.6px;width:34.4px;height:34.4px;box-sizing:border-box;border-radius:6px;border:2.4px solid #1c1c1c;background:linear-gradient(#b4b4b4 0,#a8a8a8 50%,#8a8a8a 50%,#848484 100%)"></div>
<div style="left:1582.8px;top:1006.6px;width:15.6px;height:15.2px;background:linear-gradient(#262626 50%,#000 50%)"></div>
<div style="left:1619.2px;top:969.2px;width:51.1px;height:33.3px;border-radius:5px 0 0 0;background:linear-gradient(#bcbcbc 0,#aeaeae 1.5px,#a2a2a2 4px,#848484 60%,#686868 100%)"></div>
<div style="left:1633.7px;top:974.8px;width:22px;height:22px;border-radius:50%;background:linear-gradient(#7c7c7c,#a4a4a4)"></div>
<div style="left:1672px;top:969.2px;width:49.3px;height:33.3px;border-radius:0;background:linear-gradient(#bcbcbc 0,#aeaeae 1.5px,#a2a2a2 4px,#848484 60%,#686868 100%)"></div>
<div style="left:1685.3px;top:974.8px;width:22px;height:22px;border-radius:50%;background:linear-gradient(#7c7c7c,#a4a4a4)"></div>
<div style="left:1722.8px;top:969.2px;width:49.2px;height:33.3px;border-radius:0;background:linear-gradient(#bcbcbc 0,#aeaeae 1.5px,#a2a2a2 4px,#848484 60%,#686868 100%)"></div>
<div style="left:1736.5px;top:974.8px;width:22px;height:22px;border-radius:50%;background:linear-gradient(#7c7c7c,#a4a4a4)"></div>
<div style="left:1773.4px;top:969.2px;width:49.6px;height:33.3px;border-radius:0;background:linear-gradient(#bcbcbc 0,#aeaeae 1.5px,#a2a2a2 4px,#848484 60%,#686868 100%)"></div>
<div style="left:1787.3px;top:974.8px;width:22px;height:22px;border-radius:50%;background:linear-gradient(#7c7c7c,#a4a4a4)"></div>
<div style="left:1824.2px;top:969.2px;width:49.6px;height:33.3px;border-radius:0;background:linear-gradient(#bcbcbc 0,#aeaeae 1.5px,#a2a2a2 4px,#848484 60%,#686868 100%)"></div>
<div style="left:1838.2px;top:974.8px;width:22px;height:22px;border-radius:50%;background:linear-gradient(#7c7c7c,#a4a4a4)"></div>
<div style="left:1874.4px;top:969.2px;width:46px;height:33.3px;background:linear-gradient(#2a2a2a,#3c3c3c)"></div>
<div style="left:1889.8px;top:974.8px;width:22px;height:22px;border-radius:50%;background:linear-gradient(#2b2b2b,#444)"></div>
<svg style="left:1620px;top:969px" width="300" height="34" viewBox="1620 969 300 34"><rect x="1640" y="981.1" width="9.4" height="9.4" fill="#2e2e2e"/><path d="M1692.6 979.8L1702.6 985.9L1692.6 992z" fill="#2e2e2e"/><path d="M1744.3 980.2h-2.6v11.4h2.6M1750.7 980.2h2.6v11.4h-2.6" fill="none" stroke="#2e2e2e" stroke-width="1.9"/><circle cx="1745.6" cy="985.9" r="0.9" fill="#2e2e2e"/><circle cx="1749.4" cy="985.9" r="0.9" fill="#2e2e2e"/><path d="M1798.3 985.8C1796.6 983.2 1795.2 982.4 1793.7 982.4a3.4 3.4 0 0 0 0 6.8C1795.2 989.2 1796.6 988.4 1798.3 985.8C1800 983.2 1801.4 982.4 1802.9 982.4a3.4 3.4 0 0 1 0 6.8C1801.4 989.2 1800 988.4 1798.3 985.8z" fill="none" stroke="#2e2e2e" stroke-width="1.9"/><path d="M1843.6 984.6a5.8 5.8 0 0 1 9.8-2.6M1854.8 987.2a5.800 5.800 0 0 1-9.800 2.600" fill="none" stroke="#2e2e2e" stroke-width="2"/><path d="M1855.2 979.4v4.6h-4.600zM1843.2 992.4v-4.600h4.600z" fill="#2e2e2e"/></svg>
<div style="left:1619.2px;top:1004.2px;width:153.4px;height:34px;border-radius:5px 0 0 5px;background:linear-gradient(#c0c0c0 0,#b0b0b0 1.5px,#a4a4a4 4px,#8a8a8a 50%,#6c6c6c 100%)"></div>
<div style="left:1773.6px;top:1004.2px;width:147px;height:34px;background:linear-gradient(#c0c0c0 0,#b0b0b0 1.5px,#a4a4a4 4px,#8a8a8a 50%,#6c6c6c 100%)"></div>
<div style="left:1642.3px;top:1010.3px;width:22px;height:22px;border-radius:50%;background:linear-gradient(#7c7c7c,#a4a4a4)"></div>
<div style="left:1883.7px;top:1010.3px;width:22px;height:22px;border-radius:50%;background:linear-gradient(#7c7c7c,#a4a4a4)"></div>
<svg style="left:1640px;top:1010px" width="270" height="24" viewBox="1640 1010 270 24" fill="none" stroke="#333" stroke-width="1.7"><path d="M1652.6 1016.4L1648.6 1021.3L1652.6 1026.2M1657.6 1016.4L1653.6 1021.3L1657.6 1026.2"/><path d="M1890.6 1016.4L1894.6 1021.3L1890.6 1026.2M1895.6 1016.4L1899.6 1021.3L1895.6 1026.200"/></svg>
<span class="t" style="top:1008.80px;font-size:25.4px;line-height:25.4px;color:#303030;left:1683.30px;transform-origin:0 0;transform:scaleX(1.0363);text-shadow:0 0 1px #303030;">Back</span>
<span class="t" style="top:1008.80px;font-size:25.4px;line-height:25.4px;color:#303030;left:1803.80px;transform-origin:0 0;transform:scaleX(1.1394);text-shadow:0 0 1px #303030;">Next</span>
</div>
</body></html>
